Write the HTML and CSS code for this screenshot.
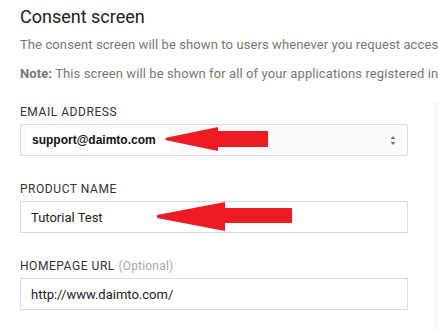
FILE: index.html
```html
<!DOCTYPE html>
<html lang="en">
  <head>
    <meta charset="UTF-8" />
    <meta name="viewport" content="width=device-width, initial-scale=1.0" />
    <title>Consent screen</title>
    <link rel="stylesheet" href="styles.css">
  </head>
  <body>
    <div class="side-panel"></div>
    <div class="container">
      <h1>Consent screen</h1>
      <p class="desc">The consent screen will be shown to users whenever you request access to their private data using your client ID.</p>
      <p class="desc note"><b>Note:</b> This screen will be shown for all of your applications registered in this project.</p>

      <div class="field">
        <label>Email address</label>
        <div class="control select">
          <span class="picked">support@daimto.com</span>
          <span class="spinner">
            <svg width="6" height="9" viewBox="0 0 6 9"><path d="M3 0 L5.5 3 H0.5 Z M3 9 L5.5 6 H0.5 Z" fill="#777"/></svg>
          </span>
          <svg class="arrow arrow-email" width="103" height="24" viewBox="0 0 103 24">
            <polygon points="0,11 1,12 0,13 53,24 53,20 103,20 103,4 53,4 53,0" fill="#ed1c24"/>
          </svg>
        </div>
      </div>

      <div class="field">
        <label>Product name</label>
        <div class="control">
          <span class="value">Tutorial Test</span>
          <svg class="arrow arrow-product" width="135" height="30" viewBox="0 0 135 30">
            <polygon points="0,13 0,16 68,29 68,21 135,21 135,6 68,6 68,0" fill="#ed1c24"/>
          </svg>
        </div>
      </div>

      <div class="field">
        <label>Homepage URL <span class="optional">(Optional)</span></label>
        <div class="control">
          <span class="value">http://www.daimto.com/</span>
        </div>
      </div>
    </div>
  </body>
</html>
```

FILE: styles.css
```css
body {
  margin: 0;
  padding: 5px 0 0 20px;
  font-family: Roboto, "Liberation Sans", sans-serif;
  background: #fff;
  overflow: hidden;
}
.side-panel {
  position: absolute;
  left: 433px;
  top: 102px;
  width: 10px;
  height: 240px;
  background: linear-gradient(to right, #fdfdfd, #f2f2f2);
}
.container {
  width: 388px;
}
h1 {
  margin: 0;
  font-size: 18px;
  line-height: 24px;
  font-weight: 400;
  color: #212121;
}
.desc {
  margin: 7px 0 0;
  font-size: 13px;
  line-height: 18px;
  color: #777;
  letter-spacing: 0.1px;
  white-space: nowrap;
}
.note {
  margin-top: 11px;
}
.note b {
  font-weight: 700;
  color: #777;
}
.field {
  margin-top: 21px;
}
.field + .field {
  margin-top: 25px;
}
label {
  display: block;
  margin-bottom: 4px;
  font-size: 12px;
  line-height: 16px;
  color: #333;
  text-transform: uppercase;
  letter-spacing: 0.55px;
}
.optional {
  text-transform: none;
  color: #aaa;
  letter-spacing: 0.2px;
}
.control {
  position: relative;
  display: flex;
  align-items: center;
  height: 32px;
  box-sizing: border-box;
  border: 1px solid #dcdcdc;
  background: #fff;
  padding-left: 10px;
}
.select {
  background: #fafafa;
  border-radius: 2px;
  padding-left: 6px;
}
.picked {
  display: inline-block;
  height: 25px;
  line-height: 25px;
  padding: 0 13px 0 5px;
  background: #fff;
  font-family: "Liberation Sans", Arial, sans-serif;
  font-size: 12px;
  font-weight: 700;
  color: #111;
}
.spinner {
  margin-left: auto;
  margin-right: 11px;
  display: flex;
}
.value {
  font-family: Roboto, "Liberation Sans", sans-serif;
  font-size: 13px;
  color: #222;
}
.arrow {
  position: absolute;
}
.arrow-email {
  left: 144px;
  top: 2px;
}
.arrow-product {
  left: 136px;
  top: 0;
}
```
